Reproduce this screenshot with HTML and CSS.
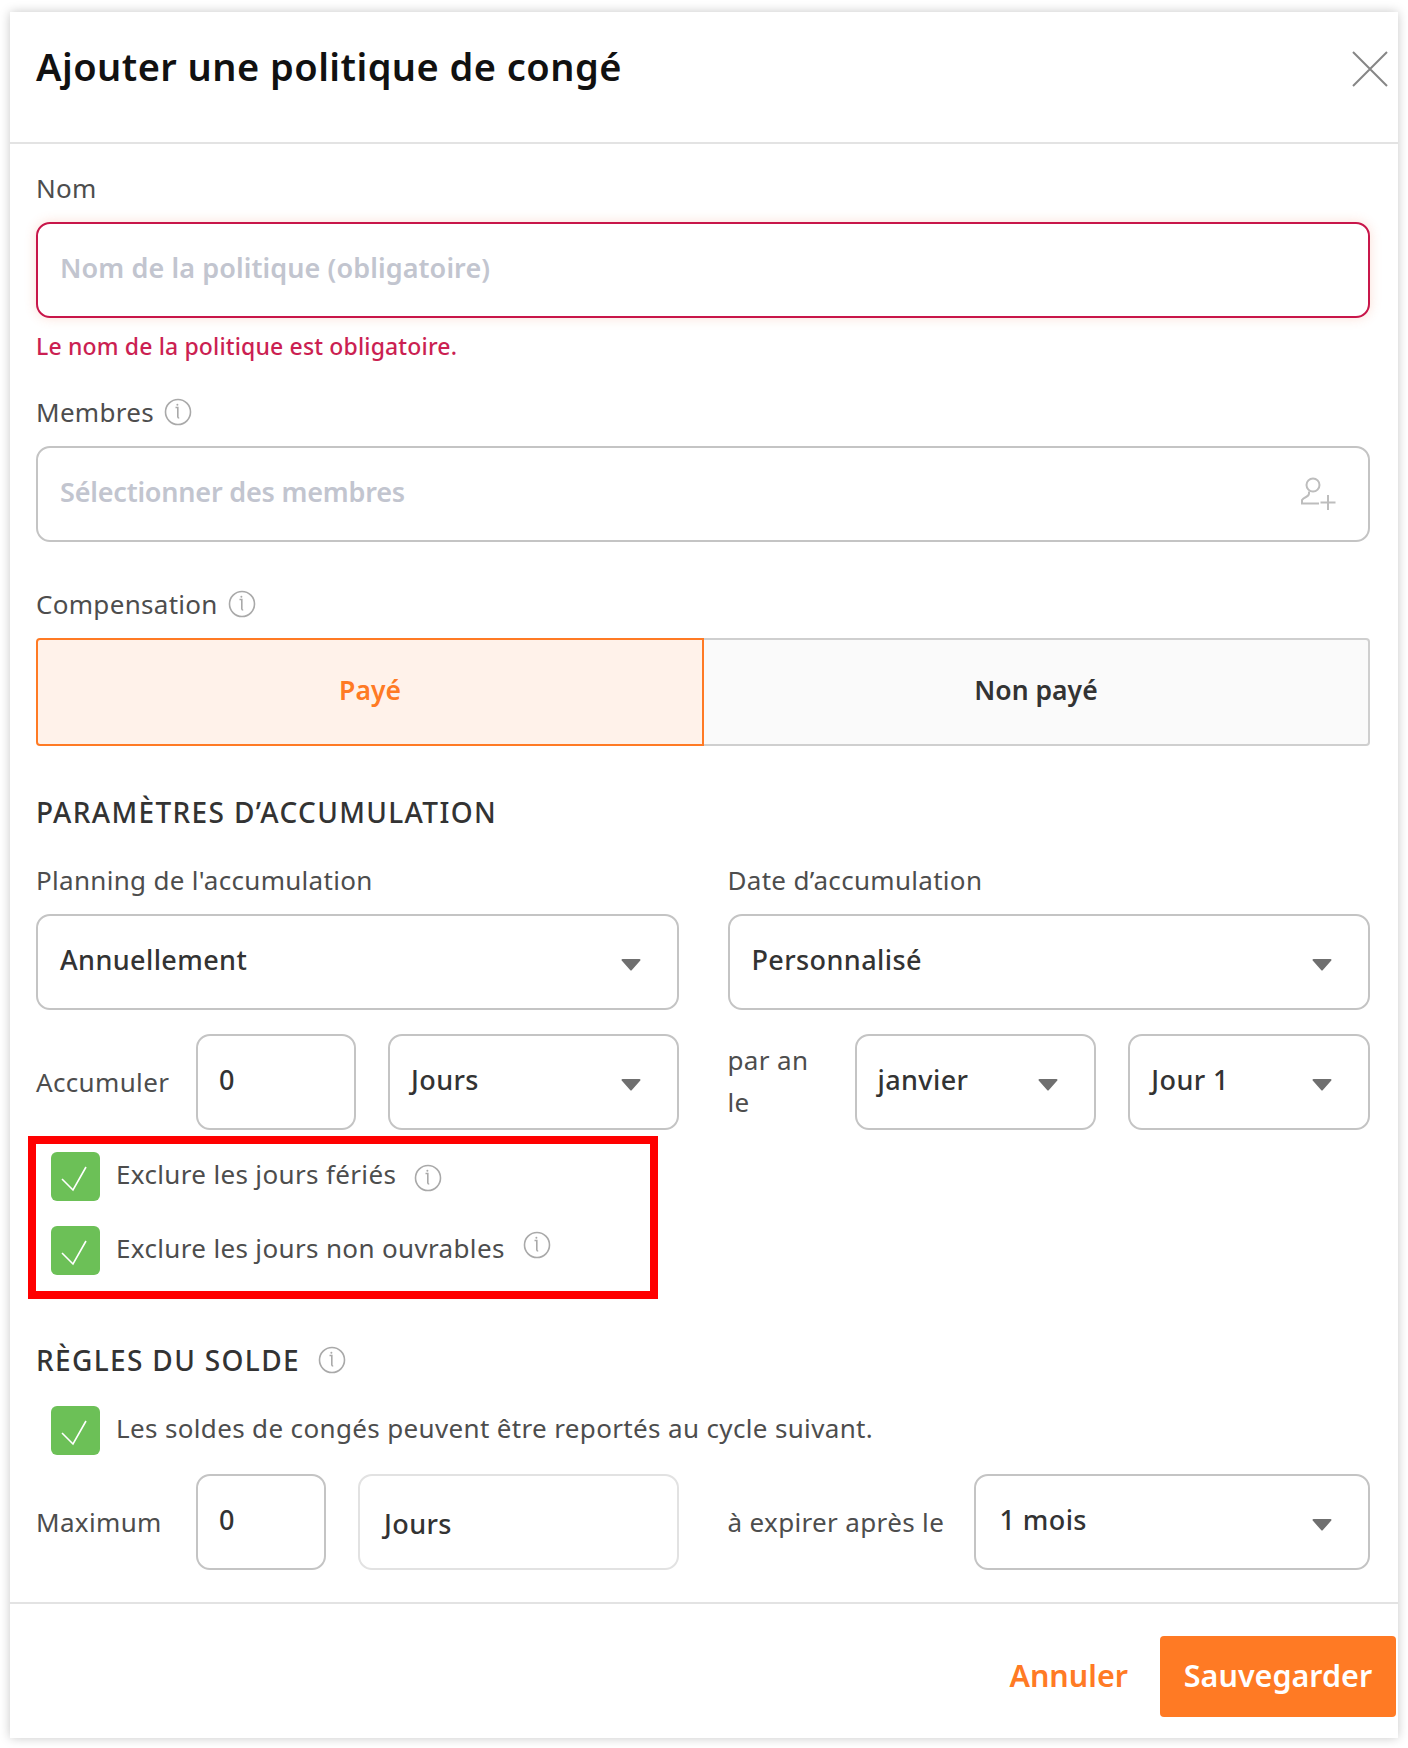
FILE: index.html
```html
<!DOCTYPE html>
<html lang="fr">
<head>
<meta charset="utf-8">
<title>Ajouter une politique de congé</title>
<link rel="stylesheet" href="styles.css">
</head>
<body>
<svg class="defs" width="0" height="0" aria-hidden="true">
  <symbol id="info" viewBox="0 0 28 28"><circle cx="14" cy="14" r="12.5" fill="none" stroke="#a9a9a9" stroke-width="1.6"/><path d="M11.5 9.5h2.3v9.2q0 1.3 1.4 1.3" fill="none" stroke="#a9a9a9" stroke-width="1.6"/><circle cx="13.4" cy="6.8" r="1" fill="#a9a9a9"/></symbol>
  <symbol id="caret" viewBox="0 0 20 13"><path d="M1.5 1h17a1 1 0 0 1 .8 1.6l-8.4 9.4a1.2 1.2 0 0 1-1.8 0L.7 2.6A1 1 0 0 1 1.500 1z" fill="#6f6f6f"/></symbol>
  <symbol id="check" viewBox="0 0 49 49"><path d="M11 27l11 11L35 15" fill="none" stroke="#fff" stroke-width="1.6"/></symbol>
</svg>
<main class="modal">
  <header class="modal-head">
    <h1 class="title">Ajouter une politique de congé</h1>
    <svg class="close" viewBox="0 0 36 36" aria-label="Fermer"><path d="M1 1l34 34M35 1L1 35" stroke="#868686" stroke-width="2" fill="none"/></svg>
  </header>
  <div class="modal-body">
    <div class="label">Nom</div>
    <div class="box box-error placeholder">Nom de la politique (obligatoire)</div>
    <div class="error">Le nom de la politique est obligatoire.</div>

    <div class="label label-members">Membres <svg class="info"><use href="#info"/></svg></div>
    <div class="box placeholder placeholder-tight box-between">
      <span>Sélectionner des membres</span>
      <svg class="user-add" viewBox="0 0 38 36"><circle cx="13" cy="9" r="6.500" fill="none" stroke="#bdbdbd" stroke-width="2"/><path d="M9 15.500v2q0 2-3 3.500t-4 3v3.500h17M28 19v15M20.500 26.500h15" fill="none" stroke="#bdbdbd" stroke-width="2"/></svg>
    </div>

    <div class="label label-comp">Compensation <svg class="info"><use href="#info"/></svg></div>
    <div class="toggle">
      <div class="toggle-on">Payé</div>
      <div class="toggle-off">Non payé</div>
    </div>

    <h2 class="section section-accrual">PARAMÈTRES D’ACCUMULATION</h2>

    <div class="columns columns-labels">
      <div class="label">Planning de l'accumulation</div>
      <div class="label">Date d’accumulation</div>
    </div>
    <div class="columns">
      <div class="box select value">Annuellement <svg class="caret"><use href="#caret"/></svg></div>
      <div class="box select value">Personnalisé <svg class="caret"><use href="#caret"/></svg></div>
    </div>

    <div class="columns columns-accrue">
      <div class="inline-row">
        <span class="row-label w-left">Accumuler</span>
        <div class="box num value">0</div>
        <div class="box select select-grow value">Jours <svg class="caret"><use href="#caret"/></svg></div>
      </div>
      <div class="inline-row">
        <span class="row-label row-label-stack w-par">par an<br>le</span>
        <div class="box select select-grow value">janvier <svg class="caret"><use href="#caret"/></svg></div>
        <div class="box select select-grow value">Jour 1 <svg class="caret"><use href="#caret"/></svg></div>
      </div>
    </div>

    <div class="highlight">
      <div class="check-row">
        <span class="checkbox"><svg class="check-mark"><use href="#check"/></svg></span>
        <span class="check-text">Exclure les jours fériés</span>
        <svg class="info info-low"><use href="#info"/></svg>
      </div>
      <div class="check-row">
        <span class="checkbox"><svg class="check-mark"><use href="#check"/></svg></span>
        <span class="check-text">Exclure les jours non ouvrables</span>
        <svg class="info info-high"><use href="#info"/></svg>
      </div>
    </div>

    <h2 class="section section-balance">RÈGLES DU SOLDE <svg class="info"><use href="#info"/></svg></h2>

    <div class="check-row check-carry">
      <span class="checkbox"><svg class="check-mark"><use href="#check"/></svg></span>
      <span class="check-text">Les soldes de congés peuvent être reportés au cycle suivant.</span>
    </div>

    <div class="columns columns-max">
      <div class="inline-row">
        <span class="row-label w-left">Maximum</span>
        <div class="box num-small value">0</div>
        <div class="box unit value">Jours</div>
      </div>
      <div class="inline-row">
        <span class="row-label w-expire">à expirer après le</span>
        <div class="box select select-grow pad-wide value">1 mois <svg class="caret"><use href="#caret"/></svg></div>
      </div>
    </div>
  </div>
  <footer class="modal-foot">
    <button class="btn-text" type="button">Annuler</button>
    <button class="btn-save" type="button">Sauvegarder</button>
  </footer>
</main>
</body>
</html>
```

FILE: styles.css
```css
* { box-sizing: border-box; }
html, body { margin: 0; padding: 0; background: #fff; }
body {
  width: 1408px;
  height: 1748px;
  padding: 12px 10px 10px;
  font-family: "Noto Sans", "Open Sans", sans-serif;
  color: #444;
  overflow: hidden;
}
.defs { position: absolute; }
.modal {
  width: 1388px;
  height: 1726px;
  background: #fff;
  box-shadow: 0 0 10px rgba(0, 0, 0, .22);
  display: flex;
  flex-direction: column;
}
.modal-head {
  height: 132px;
  flex: none;
  border-bottom: 2px solid #e3e3e3;
  display: flex;
  justify-content: space-between;
  padding: 28px 0 0 26px;
}
.title {
  margin: 0;
  font-size: 38px;
  line-height: 52px;
  font-weight: 600;
  color: #111;
  letter-spacing: .45px;
}
.close { width: 36px; height: 36px; margin: 11px 10px 0 0; flex: none; }
.modal-body { padding: 27px 28px 0 26px; flex: none; height: 1460px; border-bottom: 2px solid #e3e3e3; }
.label {
  font-size: 26px;
  line-height: 34px;
  color: #4d4d4d;
  letter-spacing: .3px;
  display: flex;
  align-items: center;
  gap: 10px;
}
.label-members { margin-top: 34px; }
.label-comp { margin-top: 45px; }
.info { width: 28px; height: 28px; flex: none; }
.box {
  height: 96px;
  border: 2px solid #c4c4c4;
  border-radius: 14px;
  background: #fff;
  display: flex;
  align-items: center;
  padding: 0 21px 5px 22px;
  font-size: 27px;
  margin-top: 17px;
}
.box-error {
  border-color: #c8164a;
  box-shadow: 0 0 12px rgba(240, 110, 70, .22);
}
.box-between { justify-content: space-between; padding-right: 30px; }
.placeholder { color: #c2c5cf; font-weight: 600; letter-spacing: .1px; }
.placeholder-tight { letter-spacing: -.2px; }
.error {
  margin-top: 13px;
  font-size: 23px;
  line-height: 30px;
  font-weight: 500;
  color: #cb1f52;
  letter-spacing: .15px;
}
.user-add { width: 38px; height: 36px; margin-top: 5px; }
.toggle { display: flex; height: 108px; margin-top: 17px; font-size: 26.500px; font-weight: 600; }
.toggle-on, .toggle-off { flex: 1; display: flex; align-items: center; justify-content: center; padding-bottom: 4px; }
.toggle-on {
  background: #fff2ea;
  border: 2px solid #ff7a24;
  border-radius: 4px 0 0 4px;
  color: #ff7a24;
}
.toggle-off {
  background: #fafafa;
  border: 2px solid #cfcfcf;
  border-left: 0;
  border-radius: 0 4px 4px 0;
  color: #333;
}
.section {
  margin: 0;
  font-size: 28px;
  line-height: 34px;
  font-weight: 500;
  color: #333;
  letter-spacing: 1.35px;
  display: flex;
  align-items: center;
  gap: 18px;
}
.section-accrual { margin-top: 49px; }
.section-balance { margin-top: 44px; }
.columns { display: grid; grid-template-columns: 1fr 1fr; column-gap: 49px; }
.columns-labels { margin-top: 34px; }
.columns-accrue { margin-top: 24px; }
.columns-max { margin-top: 19px; }
.value { color: #333; font-weight: 500; letter-spacing: .4px; }
.select { justify-content: space-between; padding-right: 36px; }
.caret { width: 20px; height: 13px; flex: none; margin-top: 9px; }
.inline-row { display: flex; align-items: center; gap: 32px; }
.inline-row .box { margin-top: 0; padding-left: 21px; }
.inline-row .row-label { margin-right: -32px; }
.row-label { font-size: 26px; line-height: 44px; color: #4d4d4d; letter-spacing: .35px; flex: none; }
.inline-row .row-label-stack { line-height: 42px; padding-bottom: 2px; }
.w-left { width: 160px; }
.w-par { width: 127px; }
.w-expire { width: 246px; }
.num { width: 160px; flex: none; }
.num-small { width: 130px; flex: none; }
.inline-row .unit { flex: 1; border-color: #e2e2e2; padding: 2px 0 0 24px; }
.select-grow { flex: 1; min-width: 0; }
.inline-row .pad-wide { padding-left: 24px; }
.highlight {
  width: 630px;
  height: 163px;
  margin: 6px 0 0 -8px;
  border: 8px solid #f00;
  padding: 8px 0 0 15px;
  display: flex;
  flex-direction: column;
  gap: 25px;
}
.check-row { display: flex; align-items: center; height: 49px; }
.checkbox { width: 49px; height: 49px; background: #6cc057; border-radius: 6px; flex: none; }
.check-mark { width: 49px; height: 49px; display: block; }
.check-text { font-size: 26px; color: #4d4d4d; letter-spacing: .35px; margin: 0 0 6px 16px; }
.info-low { margin: 2px 0 0 18px; }
.info-high { margin: -12px 0 0 18px; }
.check-carry { margin: 29px 0 0 15px; }
.modal-foot {
  flex: 1;
  display: flex;
  justify-content: flex-end;
  align-items: flex-start;
  padding: 32px 2px 0 0;
  gap: 32px;
}
.btn-text, .btn-save { font-family: inherit; font-size: 30.500px; font-weight: 600; border: 0; }
.btn-text { background: none; color: #ff7a24; height: 81px; padding: 0 0 4px; }
.btn-save { background: #ff7a24; color: #fff; width: 236px; height: 81px; border-radius: 4px; padding: 0 0 4px; }
```
